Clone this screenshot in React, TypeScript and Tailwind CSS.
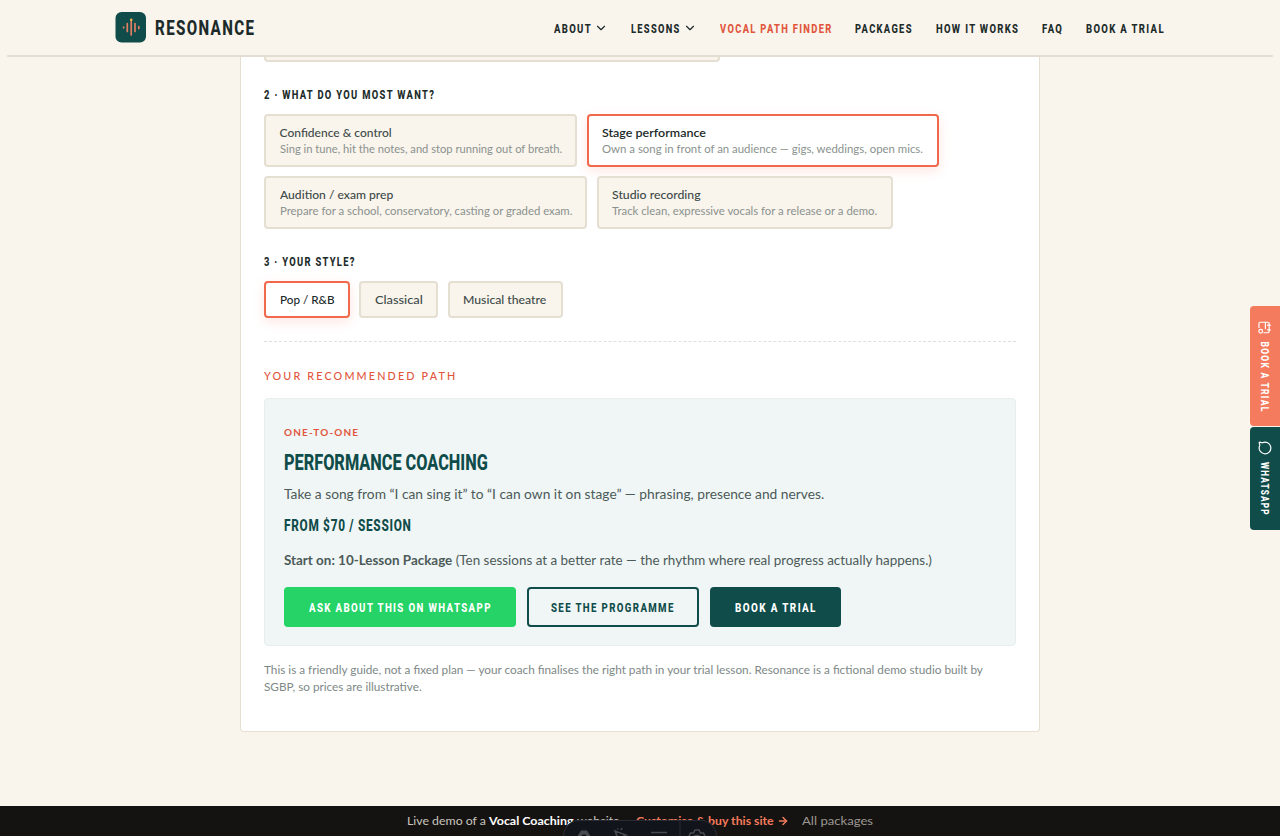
import { useLayoutEffect, useRef, type ReactNode } from 'react';
import { ArrowRight, ChevronDown, MessageCircle } from 'lucide-react';
import clsx from 'clsx';

// One line of text stretched or condensed to a fixed width
function Fit({ w, className, children }: { w: number; className?: string; children: ReactNode }) {
  const inner = useRef<HTMLSpanElement>(null);

  useLayoutEffect(() => {
    const el = inner.current;
    if (!el) return;
    el.style.transform = `scaleX(${w / el.offsetWidth})`;
  }, [w]);

  return (
    <span className="block shrink-0 whitespace-nowrap" style={{ width: w }}>
      <span ref={inner} className={clsx('block w-max origin-left', className)}>
        {children}
      </span>
    </span>
  );
}

const display = "font-['Roboto'] font-extrabold tracking-[0.14em]";

const nav = [
  { label: 'ABOUT', w: 38, menu: true },
  { label: 'LESSONS', w: 49.5, menu: true },
  { label: 'VOCAL PATH FINDER', w: 112.5, active: true },
  { label: 'PACKAGES', w: 57.5 },
  { label: 'HOW IT WORKS', w: 83.5 },
  { label: 'FAQ', w: 21 },
  { label: 'BOOK A TRIAL', w: 79 },
];

const goals = [
  [
    { title: 'Confidence & control', tw: 112, desc: 'Sing in tune, hit the notes, and stop running out of breath.', dw: 282 },
    { title: 'Stage performance', tw: 104, desc: 'Own a song in front of an audience — gigs, weddings, open mics.', dw: 321, active: true },
  ],
  [
    { title: 'Audition / exam prep', tw: 113, desc: 'Prepare for a school, conservatory, casting or graded exam.', dw: 292 },
    { title: 'Studio recording', tw: 89, desc: 'Track clean, expressive vocals for a release or a demo.', dw: 265 },
  ],
];

const styles = [
  { label: 'Pop / R&B', w: 54.5, active: true },
  { label: 'Classical', w: 48 },
  { label: 'Musical theatre', w: 83.5 },
];

const chip = 'rounded-[4px] border-2 border-[#e5dfd2] bg-[#f9f4ec] text-[#3d4a48] font-medium';
const chipActive =
  'rounded-[4px] border-2 border-[#f0694d] bg-white text-[#1c2b2a] font-semibold shadow-[0_4px_12px_rgba(240,105,77,0.16)]';

function Logo() {
  return (
    <div className="flex items-center gap-[9px]">
      <svg viewBox="0 0 31 31" className="size-[31px]">
        <rect x="0.500" width="30.500" height="30.500" rx="6" fill="#0f4c4a" />
        <g stroke="#e07f63" strokeWidth="1.7" strokeLinecap="round">
          <path d="M12.300 11.500v8M20 11.500v8" />
          <path d="M16.200 8v15" />
          <path d="M8.600 15.200v.6M23.800 14.500v2" />
        </g>
        <circle cx="16.200" cy="7.800" r="1.300" fill="#e9b44c" />
      </svg>
      <Fit w={100} className="pt-0.5 font-['Roboto'] text-[21px] leading-[31px] font-extrabold tracking-[0.09em] text-[#1c2b2a]">
        RESONANCE
      </Fit>
    </div>
  );
}

function Header() {
  return (
    <header className="flex h-[57px] flex-col items-center">
      <div className="flex h-[55px] w-[1050px] items-center justify-between">
        <Logo />
        <nav className="flex items-center gap-[23px]">
          {nav.map((item) => (
            <a key={item.label} className={clsx('flex items-center gap-0.5', item.active ? 'text-[#e0553c]' : 'text-[#1c2b2a]')}>
              <Fit w={item.w} className={clsx(display, 'text-[13.5px] leading-5')}>
                {item.label}
              </Fit>
              {item.menu && <ChevronDown className="size-3.5" strokeWidth={2} />}
            </a>
          ))}
        </nav>
      </div>
      <div className="h-0.5 w-[1266px] rounded-full bg-[#e3ddd2]" />
    </header>
  );
}

function Result() {
  return (
    <section className="h-[248px] rounded-[4px] border border-[#e6efee] bg-[#f0f6f6] pt-[23.5px] pl-[19.4px]">
      <Fit w={75.5} className="font-['Lato'] text-[10px] leading-[18px] font-bold tracking-[0.12em] text-[#e0553c]">
        ONE-TO-ONE
      </Fit>
      <div className="pt-[6px]">
        <Fit w={203.5} className="font-['Roboto'] text-[22px] leading-8 font-extrabold text-[#0f4c4a]">
          PERFORMANCE COACHING
        </Fit>
      </div>
      <div className="pt-[5px]">
        <Fit w={540.5} className="font-['Lato'] text-[13.5px] leading-5 text-[#4c5a58]">
          Take a song from “I can sing it” to “I can own it on stage” — phrasing, presence and nerves.
        </Fit>
      </div>
      <div className="pt-[10.5px]">
        <Fit w={127.5} className="font-['Roboto'] text-[16.5px] leading-6 font-extrabold tracking-[0.06em] text-[#0f4c4a]">
          FROM $70 / SESSION
        </Fit>
      </div>
      <div className="pt-3">
        <Fit w={648} className="font-['Lato'] text-[13.5px] leading-5 text-[#4c5a58]">
          <b className="font-bold">Start on: 10-Lesson Package</b> (Ten sessions at a better rate — the rhythm where real
          progress actually happens.)
        </Fit>
      </div>
      <div className="mt-[16.5px] flex gap-[11px]">
        <button className="flex h-10 w-[232px] items-center justify-center rounded-[4px] bg-[#25d366] text-white">
          <Fit w={183} className={clsx(display, 'text-[13.5px] leading-5')}>ASK ABOUT THIS ON WHATSAPP</Fit>
        </button>
        <button className="flex h-10 w-[172px] items-center justify-center rounded-[4px] border-2 border-[#0f4c4a] text-[#0f4c4a]">
          <Fit w={124} className={clsx(display, 'text-[13.5px] leading-5')}>SEE THE PROGRAMME</Fit>
        </button>
        <button className="flex h-10 w-[131px] items-center justify-center rounded-[4px] bg-[#0f4c4a] text-white">
          <Fit w={82} className={clsx(display, 'text-[13.5px] leading-5')}>BOOK A TRIAL</Fit>
        </button>
      </div>
    </section>
  );
}

function Finder() {
  return (
    <main className="mx-auto h-[674.5px] w-[800px] rounded-b-[4px] border border-t-0 border-[#e5dfd2] bg-white px-[23px]">
      <div className="h-[5px] w-[456px] rounded-b-[4px] border-2 border-t-0 border-[#e5dfd2] bg-[#f9f4ec]" />

      <h3 className="mt-[22px] text-[#1c2b2a]">
        <Fit w={171} className={clsx(display, 'text-[13.5px] leading-5')}>2 · WHAT DO YOU MOST WANT?</Fit>
      </h3>
      <div className="mt-[10px] flex flex-col gap-[9.4px]">
        {goals.map((row, i) => (
          <div key={i} className="flex gap-[9.5px]">
            {row.map((goal) => (
              <button key={goal.title} className={clsx('h-[53px] px-[13.6px] text-left', goal.active ? chipActive : chip)}>
                <Fit w={goal.tw} className="font-['Lato'] text-[12px] leading-4">
                  {goal.title}
                </Fit>
                <Fit w={goal.dw} className="font-['Lato'] text-[11px] leading-4 font-normal text-[#8a928e]">
                  {goal.desc}
                </Fit>
              </button>
            ))}
          </div>
        ))}
      </div>

      <h3 className="mt-[22px] text-[#1c2b2a]">
        <Fit w={92} className={clsx(display, 'text-[13.5px] leading-5')}>3 · YOUR STYLE?</Fit>
      </h3>
      <div className="mt-[9.5px] flex gap-[9.5px]">
        {styles.map((style) => (
          <button key={style.label} className={clsx('h-[37.5px] px-[13.6px]', style.active ? chipActive : chip)}>
            <Fit w={style.w} className="font-['Lato'] text-[12px] leading-4 font-medium">
              {style.label}
            </Fit>
          </button>
        ))}
      </div>

      <div className="mt-[22.5px] border-t border-dashed border-[#dfe0da]" />

      <div className="mt-[24.5px]">
        <Fit w={193} className="font-['Lato'] text-[11px] leading-5 font-medium tracking-[0.2em] text-[#e0553c]">
          YOUR RECOMMENDED PATH
        </Fit>
      </div>
      <div className="mt-[12px]">
        <Result />
      </div>
      <div className="mt-[14.5px] text-[#7d8886]">
        <Fit w={718.5} className="font-['Lato'] text-[11px] leading-[17.5px]">
          This is a friendly guide, not a fixed plan — your coach finalises the right path in your trial lesson. Resonance
          is a fictional demo studio built by
        </Fit>
        <Fit w={158} className="font-['Lato'] text-[11px] leading-[17.5px]">SGBP, so prices are illustrative.</Fit>
      </div>
    </main>
  );
}

function CalendarIcon() {
  return (
    <svg viewBox="0 0 24 24" className="size-3.5 shrink-0" fill="none" stroke="currentColor" strokeWidth="2" strokeLinecap="round">
      <path d="M12 21.500H5a2 2 0 0 1-2-2V6a2 2 0 0 1 2-2h14a2 2 0 0 1 2 2v7" />
      <path d="M8 2v5M16 2v5M3 10.500h11" />
      <circle cx="18.500" cy="18.500" r="3.200" />
    </svg>
  );
}

function SideTabs() {
  return (
    <aside className="absolute top-[306px] right-0 flex flex-col gap-px text-white">
      <a className="flex h-[120px] w-[30px] items-center justify-center rounded-l-[4px] bg-[#f47b5d]">
        <span className="flex w-[92px] shrink-0 rotate-90 items-center gap-[7px]">
          <CalendarIcon />
          <Fit w={71} className={clsx(display, 'pt-[3px] text-[10.5px] leading-4')}>BOOK A TRIAL</Fit>
        </span>
      </a>
      <a className="flex h-[103px] w-[30px] items-center justify-center rounded-l-[4px] bg-[#0f4c4a]">
        <span className="flex w-[75px] shrink-0 rotate-90 items-center gap-[7px]">
          <MessageCircle className="size-3.5 shrink-0" />
          <Fit w={54} className={clsx(display, 'pt-[3px] text-[10.5px] leading-4')}>WHATSAPP</Fit>
        </span>
      </a>
    </aside>
  );
}

function Toolbar() {
  return (
    <div className="absolute top-[820px] left-[563px] flex h-4 w-[154px] overflow-hidden rounded-t-[16px] border border-b-0 border-[#282b33] bg-[#12141b]">
      <svg viewBox="0 0 152 15" className="h-[15px] w-[152px]" fill="none" stroke="#484a4f" strokeWidth="1.6">
        <path d="M13 16l4-6.500h6l4 6.500h-4l-1.500-2.500h-3L17 16z" fill="#484a4f" stroke="none" />
        <path d="M53 15l-2-5 11 4-4 2M53.500 7.500l.5 1M58 7l-1 2" />
        <path d="M87 11.500h16" />
        <path d="M116 0v15" stroke="#282b33" strokeWidth="1" />
        <path d="M125 15l1.500-3 3 0 1.500-3h4l1.500 3 3 0 1.500 3" />
        <path d="M129.500 16a4 3.500 0 0 1 7 0" />
      </svg>
    </div>
  );
}

export default function App() {
  return (
    <div className="relative flex h-[836px] flex-col justify-between overflow-hidden bg-[#f9f4ec] font-['Lato',sans-serif]">
      <div>
        <Header />
        <Finder />
      </div>
      <footer className="flex h-[30px] items-center bg-[#151311] pl-[407px] text-[12px] leading-5 text-[#c9c5be]">
        <Fit w={79}>Live demo of a</Fit>
        <Fit w={88} className="pl-[3px] font-bold text-white">Vocal Coaching</Fit>
        <Fit w={59} className="pl-[3px]">website —</Fit>
        <span className="ml-[3px] flex items-center gap-[3px] font-bold text-[#f47b5d]">
          <Fit w={138}>Customise &amp; buy this site</Fit>
          <ArrowRight className="size-3" strokeWidth={3} />
        </span>
        <span className="ml-[13px] text-[#9b9791]">
          <Fit w={71}>All packages</Fit>
        </span>
      </footer>
      <SideTabs />
      <Toolbar />
    </div>
  );
}
